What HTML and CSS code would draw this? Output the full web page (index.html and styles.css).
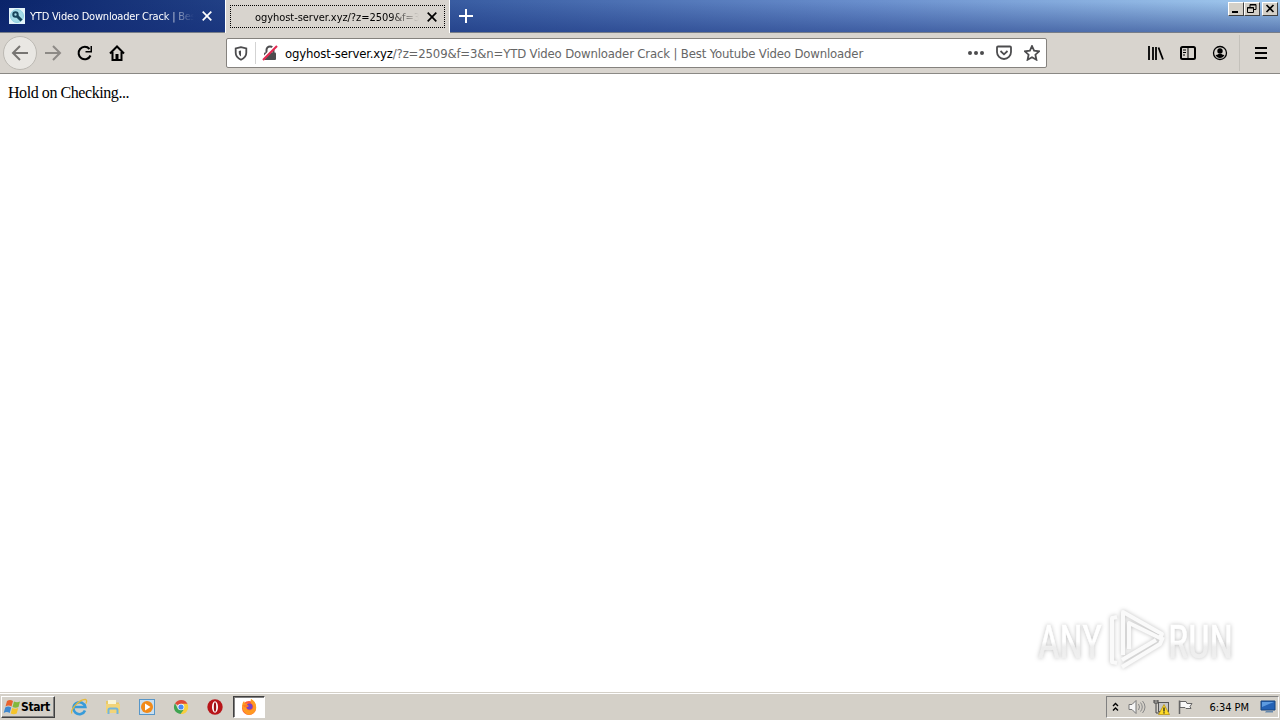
FILE: index.html
```
<!DOCTYPE html>
<html lang="en">
<head>
    <meta charset="UTF-8">
    <title>ogyhost-server.xyz</title>
    <link rel="stylesheet" href="styles.css">
</head>
<body>
    <div class="tabbar">
        <div class="tab">
            <svg class="favicon" width="16" height="16" viewBox="0 0 16 16">
                <rect width="16" height="16" fill="#e4f5fa"/>
                <circle cx="8" cy="8" r="6.5" fill="#a5dce8" stroke="#8fd0e0"/>
                <circle cx="6.5" cy="6.5" r="2.2" fill="none" stroke="#17465c" stroke-width="2"/>
                <path d="M8 8l4.500 4.500" stroke="#17465c" stroke-width="3"/>
            </svg>
            <span class="tab-title">YTD Video Downloader Crack | Best Y</span>
            <svg class="tab-close" width="10" height="10" viewBox="0 0 10 10"><path d="M.7.7l8.6 8.6M9.3.7L.7 9.3"/></svg>
        </div>
        <div class="tab active">
            <div class="tab-focus">
                <span class="tab-title">ogyhost-server.xyz/?z=2509&amp;f=3&amp;n</span>
                <svg class="tab-close" width="10" height="10" viewBox="0 0 10 10"><path d="M.7.7l8.6 8.6M9.3.7L.7 9.3"/></svg>
            </div>
        </div>
        <svg class="new-tab" width="14" height="14" viewBox="0 0 14 14"><path d="M7 0v14M0 7h14"/></svg>
        <div class="window-buttons">
            <span class="win-btn"><svg width="14" height="12" viewBox="0 0 14 12"><path d="M3 9h6" stroke-width="2"/></svg></span>
            <span class="win-btn"><svg width="14" height="12" viewBox="0 0 14 12"><path d="M5 4V1.500h6v5H9M5 2h6M2.500 4.500h6v5h-6zM2 5h7"/></svg></span>
            <span class="win-btn win-close"><svg width="14" height="12" viewBox="0 0 14 12"><path d="M3.500 2l7 7M10.500 2l-7 7" stroke-width="1.700"/></svg></span>
        </div>
    </div>

    <div class="navbar">
        <div class="nav-buttons">
            <span class="back"><svg width="18" height="18" viewBox="0 0 18 18"><path d="M17 9H2M9 2L2 9l7 7"/></svg></span>
            <svg class="forward" width="18" height="18" viewBox="0 0 18 18"><path d="M1 9h15M9 2l7 7-7 7"/></svg>
            <svg class="reload" width="16" height="16" viewBox="0 0 16 16"><path d="M12.500 4A6.200 6.200 0 1 0 13.500 10.500"/><path d="M15 1v6.500H8.500V6H13.500V1z" class="solid"/></svg>
            <svg class="home" width="16" height="16" viewBox="0 0 16 16"><path d="M1 8.500L8 1.500l7 7M3.500 7v8h9V7"/><path d="M6.500 14.500V9h3v5.500z" class="solid"/></svg>
        </div>
        <div class="urlbar">
            <svg class="shield" width="14" height="15" viewBox="0 0 14 15"><path d="M7 1.200L1.700 2.500v4.300c0 3.500 2 5.500 5.300 7 3.300-1.500 5.300-3.500 5.300-7V2.500z"/><path d="M7 4.500v6c-1.500-1-2.200-2.200-2.200-4V5z" class="fill-half"/></svg>
            <span class="url-sep"></span>
            <svg class="lock" width="16" height="16" viewBox="0 0 16 16">
                <path d="M4.500 8V5a3.500 3.500 0 0 1 7 0v3" fill="none" stroke="#4c4c4e" stroke-width="2"/>
                <rect x="2" y="7.500" width="12" height="7.500" rx="1" fill="#4c4c4e"/>
                <path d="M0 14.500L14 .500" stroke="#fff" stroke-width="3"/>
                <path d="M1 15L15 1" stroke="#e22850" stroke-width="2.200"/>
            </svg>
            <span class="url"><b>ogyhost-server.xyz</b>/?z=2509&amp;f=3&amp;n=YTD Video Downloader Crack | Best Youtube Video Downloader</span>
            <div class="url-actions">
                <svg width="16" height="16" viewBox="0 0 16 16"><g fill="#4c4c4e"><circle cx="2" cy="8" r="2"/><circle cx="8" cy="8" r="2"/><circle cx="14" cy="8" r="2"/></g></svg>
                <svg width="16" height="16" viewBox="0 0 16 16"><path d="M2 1.500h12q1 0 1 1V7A7 7 0 0 1 1 7V2.500q0-1 1-1zM4.500 6L8 9.300 11.500 6"/></svg>
                <svg width="16" height="16" viewBox="0 0 16 16"><path d="M8 1l2.100 4.700 5 .600-3.700 3.400 1 5L8 12.200l-4.400 2.500 1-5L.900 6.300l5-.600z"/></svg>
            </div>
        </div>
        <div class="tools">
            <svg width="16" height="16" viewBox="0 0 16 16"><path d="M1 1v14M5 2v13M8 2v13M10.500 2.500L15 14.500" stroke-width="1.800"/></svg>
            <svg width="16" height="16" viewBox="0 0 16 16"><rect x="1" y="2" width="14" height="12" rx="1.500" stroke-width="2"/><path d="M8 2v12M3 5h3M3 7.500h3M3 10h2" stroke-width="1"/></svg>
            <svg width="16" height="16" viewBox="0 0 16 16"><circle cx="8" cy="8" r="6.500" stroke-width="1.300"/><circle cx="8" cy="6" r="2.700" class="solid"/><path d="M3.500 10q2 0 3-1h3q1 1 3 1-1.500 3-4.500 3t-4.500-3z" class="solid"/></svg>
            <span class="tools-sep"></span>
            <svg width="12" height="12" viewBox="0 0 12 12"><path d="M0 1h12M0 6h12M0 11h12" stroke-width="2"/></svg>
        </div>
    </div>

    <main class="page">
        <p>Hold on Checking...</p>
        <svg class="watermark" width="210" height="76" viewBox="0 0 210 76">
            <defs>
                <linearGradient id="fade" x1="0" y1="0" x2="0" y2="1">
                    <stop offset="0.500" stop-color="#ffffff"/>
                    <stop offset="0.600" stop-color="#ededed"/>
                    <stop offset="1" stop-color="#f2f2f2"/>
                </linearGradient>
            </defs>
            <g class="mark-text">
                <text x="7" y="53" textLength="64" lengthAdjust="spacingAndGlyphs">ANY</text>
                <text x="137" y="53" textLength="65" lengthAdjust="spacingAndGlyphs">RUN</text>
            </g>
            <g class="mark-logo">
                <path d="M86 12l-5 1v44l5 1"/>
                <path d="M92 50V7l39 22-2 4-31-15v26"/>
                <path d="M91 62l38-23 3-7M91 55l34-20"/>
            </g>
        </svg>
    </main>

    <div class="taskbar">
        <div class="start">
            <svg width="18" height="16" viewBox="0 0 18 16">
                <path d="M4 2q3-2 6 0L8.500 7.500q-3-2-6 0z" fill="#e8622c"/>
                <path d="M11 2.500q3 1.500 6 0L15.500 8q-3 1.500-6 0z" fill="#82b83c"/>
                <path d="M2.200 8.500q3-2 6 0L6.700 14q-3-2-6 0z" fill="#3e88cf"/>
                <path d="M9.200 9q3 1.500 6 0l-1.500 5.500q-3 1.500-6 0z" fill="#f5c42b"/>
            </svg>
            <span>Start</span>
        </div>
        <div class="launchers">
            <svg width="18" height="18" viewBox="0 0 18 18">
                <path d="M15 12.500a6 6 0 1 1 .3-3.500H5" fill="none" stroke="#389bd9" stroke-width="2.600"/>
                <path d="M2 15.500C-1 13 9 1 15.500 1.500q2 .500.500 4" fill="none" stroke="#e5b93b" stroke-width="1.300"/>
            </svg>
            <svg width="18" height="18" viewBox="0 0 18 18">
                <path d="M2 3h5l1 1.500h7V15H2z" fill="#e8c967"/>
                <path d="M4 2h8v5H4z" fill="#f9f5d8"/>
                <path d="M2 6h14v9H2z" fill="#f2d478"/>
                <path d="M4.500 16v-4q0-1.500 1.500-1.500h6q1.500 0 1.500 1.500v4" fill="none" stroke="#72b5dc" stroke-width="2"/>
            </svg>
            <svg width="18" height="18" viewBox="0 0 18 18">
                <rect x="1.500" y="1.500" width="15" height="15" fill="#c9dff0" stroke="#5796c8"/>
                <circle cx="9" cy="9" r="6" fill="#f28a18"/>
                <path d="M7 5.500v7L12.500 9z" fill="#fff"/>
            </svg>
            <svg width="18" height="18" viewBox="0 0 18 18">
                <path d="M9 9L3 5.500A7 7 0 0 1 15.500 6z" fill="#df4937"/>
                <path d="M9 9V5.700h6.300A7 7 0 0 1 8.500 16l3-5z" fill="#f8ce3e"/>
                <path d="M9 9l2.500 3-3 4A7 7 0 0 1 3 5.300L6 11z" fill="#3fa451"/>
                <circle cx="9" cy="9" r="3.300" fill="#fff"/>
                <circle cx="9" cy="9" r="2.600" fill="#4a8af4"/>
            </svg>
            <svg width="18" height="18" viewBox="0 0 18 18">
                <circle cx="9" cy="9" r="7.700" fill="#b81519"/>
                <ellipse cx="9" cy="9" rx="3" ry="5.700" fill="#fff"/>
                <ellipse cx="9" cy="9" rx="1.200" ry="4.700" fill="#9c1013"/>
            </svg>
            <div class="running">
                <svg width="18" height="18" viewBox="0 0 18 18">
                    <circle cx="9" cy="10" r="7" fill="#ff5a36"/>
                    <path d="M11 1q6 4 5 10-1-5-5-6z" fill="#ffd53b"/>
                    <path d="M2 8q0-3 2-5l1 2.500h3L6 9q1 4 5 3 4-2 1-6-2-2-1-5 6 3 5 10-1 5-7 6-6-1-7-9z" fill="#ff9a22"/>
                    <circle cx="9.500" cy="8.500" r="3" fill="#7542c9"/>
                    <path d="M3 7q4-1 6 1-2 2-5 1z" fill="#ff7a22"/>
                </svg>
            </div>
        </div>
        <div class="tray">
            <svg class="chevrons" width="7" height="10" viewBox="0 0 7 10"><path d="M1 4l2.500-2.500L6 4M1 8.500L3.500 6 6 8.500" fill="none" stroke="#000" stroke-width="1.400"/></svg>
            <svg width="18" height="16" viewBox="0 0 18 16">
                <path d="M1 5.500h3l4-4v13l-4-4H1z" fill="#f6f6f6" stroke="#777"/>
                <path d="M10.500 5q2 3 0 6M12.500 3.500q3.500 4.500 0 9M14.500 2q5 6 0 12" fill="none" stroke="#888"/>
            </svg>
            <svg class="network" width="17" height="16" viewBox="0 0 17 16">
                <rect x="5.500" y="3.500" width="10" height="9" fill="#c5c5c5" stroke="#555"/>
                <path d="M1 1v3h4V1M3 4v10h4M1 2h4" fill="none" stroke="#444"/>
                <path d="M11 5.500l5.500 10h-11z" fill="#ffdc27" stroke="#b28b09" stroke-width=".7"/>
                <path d="M11 8.500v4M11 13.300v1.200" stroke="#222" stroke-width="1.300"/>
            </svg>
            <svg width="17" height="16" viewBox="0 0 17 16"><path d="M2.500 15V1.500" stroke="#666" stroke-width="1.500"/><path d="M3 2.500h6l1 2h5l-2 3 1 2H9l-1-1H3z" fill="#f8f8f8" stroke="#666"/></svg>
            <span class="clock">6:34 PM</span>
            <svg width="16" height="14" viewBox="0 0 16 14"><path d="M1 1h14v9H1z" fill="#2462b5" stroke="#16457f"/><path d="M2 2h12L2 7z" fill="#5d9be0"/><path d="M6 11h7v1.500H5z" fill="#6789ad"/></svg>
        </div>
    </div>
</body>
</html>
```
FILE: styles.css
```
* {
    box-sizing: border-box;
}
body {
    margin: 0;
    height: 720px;
    display: flex;
    flex-direction: column;
    overflow: hidden;
    background: #fff;
    font-family: "DejaVu Sans Condensed", "DejaVu Sans", sans-serif;
    font-stretch: condensed;
    font-size: 11px;
    color: #000;
}
svg {
    display: block;
    flex: none;
}

/* tabs */
.tabbar {
    display: flex;
    height: 33px;
    flex: none;
    border-bottom: 1px solid #777d88;
    background: linear-gradient(to bottom, rgba(10, 36, 106, 0) 5%, rgba(20, 45, 120, 0.5)), linear-gradient(to right, #0a246a, #3c60a5 38%, #6a8fcd 68%, #a2caee);
}
.tab {
    display: flex;
    align-items: center;
    width: 225px;
    padding: 0 13px 0 9px;
    color: #fff;
}
.tab-title {
    flex: 1;
    overflow: hidden;
    white-space: nowrap;
    margin: 1px 8px 0 5px;
    letter-spacing: -0.2px;
    -webkit-mask-image: linear-gradient(to left, transparent, #000 30px);
    mask-image: linear-gradient(to left, transparent, #000 30px);
}
.tab-close path {
    stroke: currentColor;
    stroke-width: 1.7;
}
.tab.active {
    height: 33px;
    padding: 2px 0 0;
    background: #d8d4ce;
    border-right: 1px solid #fff;
    border-left: 1px solid #fff;
    color: #000;
}
.tab.active .tab-title {
    letter-spacing: -0.05px;
}
.tab-focus {
    display: flex;
    align-items: center;
    width: 215px;
    height: 23px;
    margin: 0 0 2px 4px;
    padding: 0 7px 0 19px;
    border: 1px dotted #000;
}
.new-tab {
    margin: 9px 0 0 9px;
}
.new-tab path {
    stroke: #fff;
    stroke-width: 2;
}
.window-buttons {
    display: flex;
    margin: 2px 2px 0 auto;
}
.win-btn {
    width: 16px;
    height: 14px;
    background: #d4d0c8;
    border: 1px solid;
    border-color: #fff #404040 #404040 #fff;
}
.win-close {
    margin-left: 2px;
}
.win-btn path {
    fill: none;
    stroke: #000;
}

/* navigation */
.navbar {
    display: flex;
    align-items: center;
    height: 41px;
    flex: none;
    background: #d8d4ce;
    border-bottom: 1px solid #8a8884;
}
.nav-buttons {
    display: flex;
    align-items: center;
    width: 226px;
    padding-left: 3px;
}
.nav-buttons path,
.tools svg {
    fill: none;
    stroke: #000;
    stroke-width: 2;
}
.nav-buttons .solid,
.tools .solid {
    fill: #000;
    stroke: none;
}
.back {
    display: flex;
    align-items: center;
    justify-content: center;
    width: 34px;
    height: 34px;
    border: 1px solid #bcb9b3;
    border-radius: 50%;
    background: #e9e7e3;
}
.nav-buttons .back path {
    stroke: #777572;
}
.nav-buttons .forward path {
    stroke: #8d8a86;
}
.forward {
    margin-left: 7px;
}
.reload {
    margin-left: 15px;
}
.home {
    margin-left: 16px;
}
.urlbar {
    display: flex;
    align-items: center;
    width: 821px;
    height: 30px;
    padding: 0 6px 0 7px;
    background: #fff;
    border: 1px solid #85827e;
    border-radius: 2px;
}
.shield path {
    fill: none;
    stroke: #4c4c4e;
    stroke-width: 1.8;
}
.shield .fill-half {
    fill: #4c4c4e;
    stroke: none;
}
.url-sep {
    width: 1px;
    height: 22px;
    margin: 0 6px 0 7px;
    background: #d3d3d3;
}
.url {
    margin-left: 7px;
    font-size: 13px;
    letter-spacing: -0.15px;
    white-space: nowrap;
    color: #666;
}
.url b {
    font-weight: normal;
    color: #000;
}
.url-actions {
    display: flex;
    gap: 12px;
    margin-left: auto;
}
.url-actions path {
    fill: none;
    stroke: #4c4c4e;
    stroke-width: 1.8;
}
.tools {
    display: flex;
    align-items: center;
    gap: 16px;
    margin-left: auto;
    padding-right: 13px;
}
.tools-sep {
    width: 1px;
    height: 36px;
    margin: 0 -1px 0 -5px;
    background: #c4c1bb;
}

/* page */
.page {
    position: relative;
    flex: 1;
    padding: 10px 8px;
    font-family: "Liberation Serif", serif;
    font-size: 16px;
    line-height: 18px;
}
.page p {
    margin: 0;
    letter-spacing: -0.43px;
}
.watermark {
    position: absolute;
    left: 1031px;
    top: 531px;
    filter: drop-shadow(0 0 2px rgba(0, 0, 0, 0.25));
}
.mark-text {
    font-family: Roboto, sans-serif;
    font-size: 47px;
    fill: url(#fade);
    stroke: url(#fade);
    stroke-width: 0.6;
}
.mark-logo path {
    fill: none;
    stroke: #fafafa;
    stroke-width: 4;
    stroke-linejoin: round;
}

/* taskbar */
.taskbar {
    display: flex;
    align-items: center;
    height: 28px;
    flex: none;
    padding: 1px 1px 0 1px;
    background: #d4d0c8;
    border-top: 1px solid #d4d0c8;
    box-shadow: inset 0 1px #fff;
}
.start {
    display: flex;
    align-items: center;
    width: 54px;
    height: 22px;
    padding-left: 1px;
    border: 1px solid;
    border-color: #fff #404040 #404040 #fff;
    box-shadow: inset -1px -1px #808080;
    font-size: 12px;
    font-weight: bold;
    letter-spacing: -0.4px;
}
.launchers {
    display: flex;
    align-items: center;
    gap: 16px;
    margin-left: 15px;
}
.running {
    display: flex;
    align-items: center;
    justify-content: center;
    width: 32px;
    height: 22px;
    margin-left: -7px;
    background: #fff;
    border: 1px solid;
    border-color: #404040 #fff #fff #404040;
    box-shadow: inset 1px 1px #808080;
}
.tray {
    display: flex;
    align-items: center;
    width: 173px;
    height: 22px;
    margin-left: auto;
    padding: 0 2px 0 5px;
    gap: 7px;
    border: 1px solid;
    border-color: #808080 #fff #fff #808080;
}
.chevrons {
    margin-right: 2px;
}
.clock {
    margin-left: auto;
    margin-right: 4px;
    letter-spacing: -0.05px;
    white-space: nowrap;
}
```
